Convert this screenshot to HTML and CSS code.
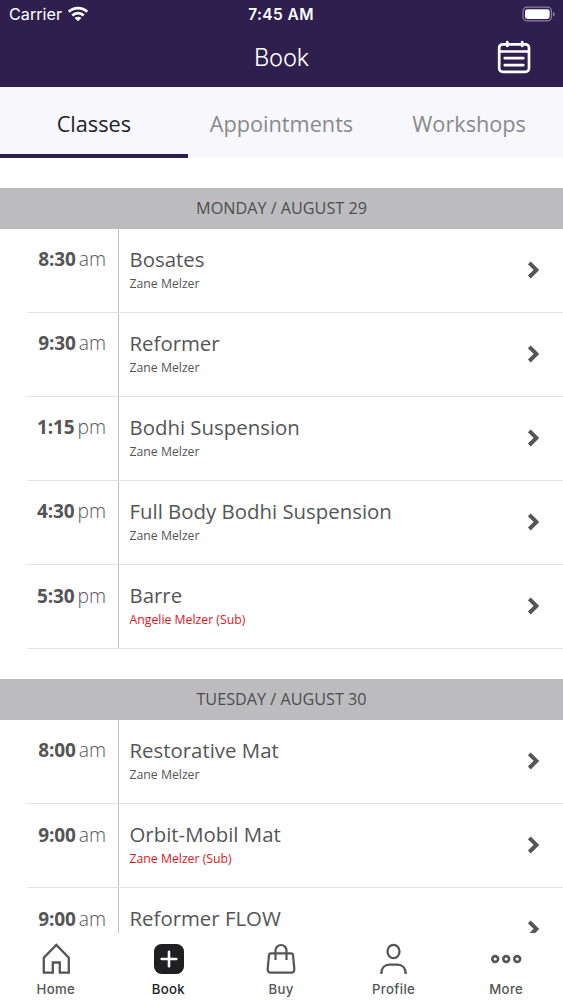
FILE: index.html
```html
<!DOCTYPE html>
<html lang="en">
<head>
<meta charset="utf-8">
<title>Book</title>
<link rel="stylesheet" href="styles.css">
</head>
<body>
<svg class="defs" width="0" height="0"><symbol id="chev" viewBox="0 0 14 20"><path d="M2.300 2.800 9.400 9.900 2.300 17" fill="none" stroke="#555" stroke-width="4"/></symbol></svg>
<div class="app">
  <header class="top">
    <div class="status">
      <div class="carrier"><span>Carrier</span>
        <svg width="22" height="16" viewBox="0 0 22 16" fill="none" stroke="#fff" stroke-width="2.8"><path d="M.8 5.700a13.400 13.400 0 0 1 18.400 0"/><path d="M4.300 9.400a8.200 8.200 0 0 1 11.400 0"/><path d="M10 15.300 6.600 12.100a4.800 4.800 0 0 1 6.800 0z" fill="#fff" stroke="none"/></svg>
      </div>
      <div class="clock">7:45 AM</div>
      <svg class="battery" width="34" height="17" viewBox="0 0 34 17"><rect x="1" y="1.200" width="28.500" height="13.600" rx="4" fill="none" stroke="#8c83a5" stroke-width="1.200"/><rect x="3" y="3.200" width="24.700" height="9.700" rx="2.300" fill="#fff"/><path d="M31 6v4.500q1.700-.5 1.700-2.250T31 6z" fill="#8c83a5"/></svg>
    </div>
    <div class="titlebar">
      <h1>Book</h1>
      <svg class="calendar" width="36" height="36" viewBox="0 0 36 36" fill="none" stroke="#fff" stroke-width="2.700" stroke-linecap="round"><rect x="3.200" y="5.300" width="29.800" height="27.600" rx="3.500"/><path d="M3.500 12.500h29M11.300 3v4M26.200 3v4M8.800 19.200h18.500M8.800 26.200h18.500"/></svg>
    </div>
  </header>
  <nav class="tabs"><div class="tab active"><span>Classes</span></div><div class="tab"><span>Appointments</span></div><div class="tab"><span>Workshops</span></div></nav>
  <main class="schedule">
    <section>
      <h2>MONDAY / AUGUST 29</h2>
      <div class="row"><div class="time"><b>8:30</b><i>am</i></div><div class="info"><h3>Bosates</h3><p>Zane Melzer</p></div><svg class="chev"><use href="#chev"/></svg></div>
      <div class="row"><div class="time"><b>9:30</b><i>am</i></div><div class="info"><h3>Reformer</h3><p>Zane Melzer</p></div><svg class="chev"><use href="#chev"/></svg></div>
      <div class="row"><div class="time"><b>1:15</b><i>pm</i></div><div class="info"><h3>Bodhi Suspension</h3><p>Zane Melzer</p></div><svg class="chev"><use href="#chev"/></svg></div>
      <div class="row"><div class="time"><b>4:30</b><i>pm</i></div><div class="info"><h3>Full Body Bodhi Suspension</h3><p>Zane Melzer</p></div><svg class="chev"><use href="#chev"/></svg></div>
      <div class="row"><div class="time"><b>5:30</b><i>pm</i></div><div class="info"><h3>Barre</h3><p class="sub">Angelie Melzer (Sub)</p></div><svg class="chev"><use href="#chev"/></svg></div>
    </section>
    <section>
      <h2>TUESDAY / AUGUST 30</h2>
      <div class="row"><div class="time"><b>8:00</b><i>am</i></div><div class="info"><h3>Restorative Mat</h3><p>Zane Melzer</p></div><svg class="chev"><use href="#chev"/></svg></div>
      <div class="row"><div class="time"><b>9:00</b><i>am</i></div><div class="info"><h3>Orbit-Mobil Mat</h3><p class="sub">Zane Melzer (Sub)</p></div><svg class="chev"><use href="#chev"/></svg></div>
      <div class="row"><div class="time"><b>9:00</b><i>am</i></div><div class="info"><h3>Reformer FLOW</h3></div><svg class="chev"><use href="#chev"/></svg></div>
    </section>
  </main>
  <footer class="bottom">
    <div class="item"><svg viewBox="0 0 34 34"><path d="M4.800 30.700V15.600L17.300 2.900l12.500 12.700v15.100h-9V20.500h-7v10.200z" fill="none" stroke="#555" stroke-width="2.300"/></svg><span>Home</span></div>
    <div class="item current"><svg viewBox="0 0 34 34"><rect x="2" y="2" width="30" height="30" rx="7.500" fill="#202024"/><path d="M17 9.700v14.600M9.700 17h14.600" stroke="#fff" stroke-width="2.600" stroke-linecap="round"/></svg><span>Book</span></div>
    <div class="item"><svg viewBox="0 0 34 34" fill="none" stroke="#555" stroke-width="2.200"><path d="M7 11.400h20q1.800 0 2 1.800l1.300 13.500q.3 4-3.300 4H7q-3.600 0-3.300-4L5 13.200q.2-1.800 2-1.800zM11.500 18V8.500a5.500 5.500 0 0 1 11 0V18"/></svg><span>Buy</span></div>
    <div class="item"><svg viewBox="0 0 34 34" fill="none" stroke="#555" stroke-width="2.300"><ellipse cx="16.500" cy="9.500" rx="6" ry="6.600"/><path d="M4.300 32c0-6 3.500-9.300 8.200-9.300h8c4.700 0 8.200 3.300 8.200 9.300"/></svg><span>Profile</span></div>
    <div class="item"><svg viewBox="0 0 34 34" fill="none" stroke="#555" stroke-width="2.600"><circle cx="5.200" cy="17" r="2.900"/><circle cx="16.200" cy="17" r="2.900"/><circle cx="27.200" cy="17" r="2.900"/></svg><span>More</span></div>
  </footer>
</div>
</body>
</html>
```
FILE: styles.css
```css
* { box-sizing: border-box; }
body, h1, h2, h3, p { margin: 0; font-weight: 400; }
body { background: #fff; color: #555; font-family: "Open Sans", sans-serif; overflow: hidden; }
.defs { display: block; height: 0; }
.app { width: 563px; height: 1000px; display: flex; flex-direction: column; overflow: hidden; }
.top { flex: 0 0 87px; background: #2f1f4e; color: #fff; }
.status { height: 29px; display: grid; grid-template-columns: 1fr auto 1fr; align-items: center; padding: 0 8px 0 9px; font-family: Inter, sans-serif; font-size: 16.200px; line-height: 29px; }
.carrier { display: flex; align-items: center; gap: 6px; }
.carrier svg { margin-bottom: 2px; }
.clock { font-weight: 600; font-size: 15.500px; letter-spacing: .4px; margin-left: -2px; }
.battery { justify-self: end; margin: 0 -1px 1px 0; }
.titlebar { height: 58px; display: grid; grid-template-columns: 1fr auto 1fr; align-items: center; padding: 0 31px; }
h1 { grid-column: 2; font-family: Inter, sans-serif; font-size: 23.700px; font-weight: 350; line-height: 58px; letter-spacing: -.2px; }
.calendar { justify-self: end; margin-bottom: 2px; }
.tabs { flex: 0 0 71px; display: grid; grid-template-columns: repeat(3, 1fr); background: #f8f8fc; }
.tab { text-align: center; font-size: 21.700px; font-weight: 370; line-height: 74px; height: 71px; color: #88888c; }
.active { color: #222226; border-bottom: 4px solid #2b1d4c; }
.schedule { flex: 1; min-height: 0; overflow: hidden; }
section { padding-top: 30px; }
h2 { height: 40.500px; background: #bcbcbf; color: #4d4d50; font-size: 16.200px; line-height: 41px; text-align: center; }
.row { height: 84.200px; margin-left: 27px; display: flex; align-items: stretch; border-bottom: 1px solid #e3e3e5; }
.time { width: 91.500px; padding: 16.400px 11.500px 0 0; border-right: 1.600px solid #bfbfc2; font-size: 19.300px; line-height: 28px; text-align: right; white-space: nowrap; }
.time b { font-weight: 700; font-size: 19px; letter-spacing: -.1px; }
.time i { font-style: normal; font-weight: 300; margin-left: 3px; }
.info { flex: 1; padding: 16px 0 0 11px; }
h3 { font-size: 20.400px; font-weight: 380; line-height: 29px; }
p { font-size: 12.250px; line-height: 18px; margin-top: 1px; }
.sub { color: #e0161c; }
.chev { width: 14px; height: 20px; margin: 31px 22.500px 0 0; }
.bottom { flex: 0 0 67px; display: grid; grid-template-columns: repeat(5, 1fr); background: #fff; }
.item { display: flex; flex-direction: column; align-items: center; padding-top: 9px; font-family: Inter, sans-serif; font-size: 13.200px; font-weight: 450; line-height: 18px; letter-spacing: .35px; }
.item svg { width: 34px; height: 34px; margin-bottom: 4px; }
.item span { margin-left: -1px; }
.current { color: #202024; font-weight: 550; }
```
